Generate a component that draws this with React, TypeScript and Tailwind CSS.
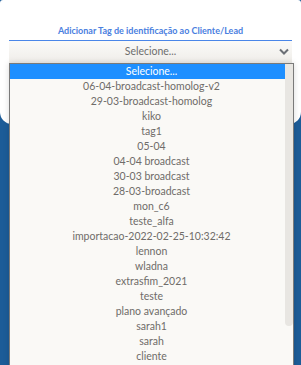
import React from "react";

const items = [
  "06-04-broadcast-homolog-v2",
  "29-03-broadcast-homolog",
  "kiko",
  "tag1",
  "05-04",
  "04-04 broadcast",
  "30-03 broadcast",
  "28-03-broadcast",
  "mon_c6",
  "teste_alfa",
  "importacao-2022-02-25-10:32:42",
  "lennon",
  "wladna",
  "extrasfim_2021",
  "teste",
  "plano avançado",
  "sarah1",
  "sarah",
  "cliente",
];

export default function App() {
  return (
    <div
      className="relative w-[301px] h-[365px] overflow-hidden bg-[#1c5c98]"
      style={{ fontFamily: 'Lato, "Open Sans", sans-serif' }}
    >
      <div className="bg-white rounded-t-[3px] rounded-b-[12px] h-[124px] pt-[25px]">
        <div className="text-center text-[9px] leading-[12px] font-bold text-[#4a80e0]">
          Adicionar Tag de identificação ao Cliente/Lead
        </div>
        <div className="mx-[9px] mt-[3px] border-t border-[#4a86e8]">
          <div className="relative h-[22px] bg-gradient-to-b from-[#fbfaf8] to-[#efede9] flex items-center justify-center text-[10.5px] text-[#6e6e6e]">
            Selecione...
            <svg
              className="absolute right-[3px] top-[7px]"
              width="10"
              height="7"
              viewBox="0 0 10 7"
            >
              <path d="M1 1.5 L5 5.5 L9 1.5" fill="none" stroke="#6b6f75" strokeWidth="2" />
            </svg>
          </div>
        </div>
      </div>
      <div className="absolute left-[9px] top-[63px] w-[285px] h-[320px] border border-[#7a7a7a] bg-[#faf9f6] shadow-[0_0_6px_rgba(0,0,0,0.15)]">
        <div className="relative">
          <div className="h-[15px] leading-[15px] bg-[#1e8fff] text-white text-center text-[10.5px]">
            Selecione...
          </div>
          {items.map((t) => (
            <div
              key={t}
              className="h-[15px] leading-[15px] text-center text-[10.5px] text-[#6f6c69] whitespace-nowrap"
            >
              {t}
            </div>
          ))}
          <div className="absolute right-0 top-0 w-[8px] h-[262px] bg-[#e8e6e2] rounded-b-[4px]" />
        </div>
      </div>
    </div>
  );
}
